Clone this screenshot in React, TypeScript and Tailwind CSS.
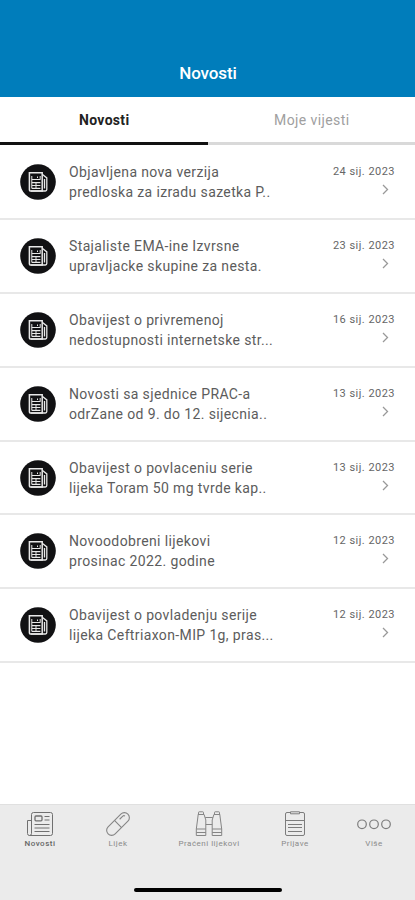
const news = [
    { first: 'Objavljena nova verzija', second: 'predloska za izradu sazetka P..', date: '24 sij. 2023' },
    { first: 'Stajaliste EMA-ine Izvrsne', second: 'upravljacke skupine za nesta.', date: '23 sij. 2023' },
    { first: 'Obavijest o privremenoj', second: 'nedostupnosti internetske str...', date: '16 sij. 2023' },
    { first: 'Novosti sa sjednice PRAC-a', second: 'odrZane od 9. do 12. sijecnia..', date: '13 sij. 2023' },
    { first: 'Obavijest o povlaceniu serie', second: 'lijeka Toram 50 mg tvrde kap..', date: '13 sij. 2023' },
    { first: 'Novoodobreni lijekovi', second: 'prosinac 2022. godine', date: '12 sij. 2023' },
    { first: 'Obavijest o povladenju serije', second: 'lijeka Ceftriaxon-MIP 1g, pras...', date: '12 sij. 2023' },
];

function NewsBadge()
{
    return (
        <svg className="h-9 w-9 shrink-0" viewBox="0 0 36 36" fill="none" stroke="#e8e8e8">
            <circle cx="18" cy="18" r="17.8" fill="#111113" stroke="none" />
            <path strokeWidth="1.5" d="M9.4 8.8h12.8v18.2H10.6a1.2 1.2 0 0 1-1.2-1.2z" />
            <path strokeWidth="1.3" d="M22.2 10.3l4.6 3.6v11.7a1.4 1.4 0 0 1-1.4 1.4H11M24.5 15v9.5" />
            <path strokeWidth="1.1" d="M11.8 15.5h8.600M11.8 18.6h8.600M11.8 21.5h8.600M11.8 24.4h8.600" />
            <path strokeWidth="1" d="M11.8 12v12.400M16 18.500v5.800M20.200 12v3.500M17.500 12.500v1.500" />
        </svg>
    );
}

function NewspaperIcon()
{
    return (
        <svg className="h-7 w-8" viewBox="0 0 32 28" fill="none" stroke="#707070" strokeWidth="1">
            <path d="M9.5 1.5h17a2 2 0 0 1 2 2v19a2 2 0 0 1-2 2h-21a2 2 0 0 1-2-2V9.500h4M7.500 22.500v-19a2 2 0 0 1 2-2M7.500 22.500a2 2 0 0 1-2 2" />
            <rect x="11" y="5" width="7" height="4.8" rx="1" strokeWidth="1.3" />
            <path d="M20.5 5.500h5M20.500 9h5M10.500 13.500h15M10.500 17h15M10.500 20.500h15" />
        </svg>
    );
}

function PillIcon()
{
    return (
        <svg className="h-7 w-7" viewBox="0 0 28 28" fill="none" stroke="#858585" strokeWidth="1.1">
            <g transform="rotate(-45 14 13)">
                <rect x="0" y="8" width="28" height="10" rx="5" />
                <path d="M14 8v10M18.500 10.800h4.500a1.500 1.500 0 0 1 1.500 1.500" />
            </g>
        </svg>
    );
}

function BinocularsIcon()
{
    return (
        <svg className="h-7 w-7" viewBox="0 0 28 28" fill="none" stroke="#858585" strokeWidth="1">
            <path d="M3.500 3.500v-2a.7.700 0 0 1 .7-.7h3.600a.7.700 0 0 1 .7.700v2M2.900 3.500h6.200M3.200 3.500L2.500 9l-1.200 9v6.500h9.500V9l-1.700-5.500M1.300 18h9.500M1.300 21.500h9.500" />
            <path d="M24.500 3.500v-2a.7.700 0 0 0-.7-.7h-3.600a.7.700 0 0 0-.7.700v2M25.100 3.500h-6.200M24.800 3.500l.7 5.500 1.200 9v6.500h-9.500V9l1.700-5.500M26.700 18h-9.500M26.700 21.500h-9.500" />
            <path d="M10.200 6.500h7.600M10.800 13.500h6.400" />
        </svg>
    );
}

function ClipboardIcon()
{
    return (
        <svg className="h-7 w-7" viewBox="0 0 28 28" fill="none" stroke="#7c7c7c" strokeWidth="1">
            <path d="M9 1.500H6A1.500 1.500 0 0 0 4.500 3v20A1.500 1.500 0 0 0 6 24.500h16a1.500 1.500 0 0 0 1.500-1.500V3A1.500 1.500 0 0 0 22 1.500h-3" />
            <path d="M9.500 .8h9v2h-9zM4.500 9.500h19M7 13.500h14M7 16.500h14M7 20.500h14" />
        </svg>
    );
}

function MoreIcon()
{
    return (
        <svg className="h-7 w-9" viewBox="0 0 36 28" fill="none" stroke="#7c7c7c" strokeWidth="1.2">
            <circle cx="6" cy="13.3" r="4.3" />
            <circle cx="18" cy="13.3" r="4.3" />
            <circle cx="30" cy="13.3" r="4.3" />
        </svg>
    );
}

export default function App()
{
    return (
        <div className="flex h-[900px] w-[415px] flex-col overflow-hidden bg-white font-['Roboto',sans-serif]">
            <header className="flex h-[97px] shrink-0 items-end justify-center bg-[#007dbb] pb-3">
                <h1 className="pl-px text-[17px] leading-6 font-medium tracking-[-0.1px] text-white">Novosti</h1>
            </header>

            <div className="flex h-12 shrink-0">
                <button className="flex-1 border-b-[3px] border-[#111] pl-px text-sm font-bold tracking-[0.3px] text-[#222]">Novosti</button>
                <button className="flex-1 border-b-[3px] border-[#d9d9d9] pl-px text-sm tracking-[0.4px] text-[#a0a0a0]">Moje vijesti</button>
            </div>

            <main className="flex-1 pt-px">
                {news.map((item, index) => (
                    <article key={index} className="flex h-[73.9px] items-center border-b-2 border-[#e8e8e8] px-5">
                        <NewsBadge />
                        <p className="ml-[13px] flex-1 text-sm leading-5 tracking-[0.37px] whitespace-nowrap text-[#5c5c5c]">
                            {item.first}
                            <br />
                            {item.second}
                        </p>
                        <div className="flex flex-col items-end pb-1">
                            <time className="text-[11px] leading-4 tracking-[0.47px] text-[#666]">{item.date}</time>
                            <svg className="mt-1 mr-1 h-3 w-3" viewBox="0 0 12 12" fill="none" stroke="#999" strokeWidth="1.3">
                                <path d="M4 1l4.500 4.500L4 10" />
                            </svg>
                        </div>
                    </article>
                ))}
            </main>

            <footer className="flex h-24 shrink-0 flex-col justify-between border-t border-[#e0e0e0] bg-[#ebebeb]">
                <nav className="flex pt-1.5 text-[8px] leading-[10px] tracking-[0.5px] text-[#8a8a8a]">
                    <div className="flex w-20 flex-col items-center font-medium text-[#666]"><NewspaperIcon />Novosti</div>
                    <div className="flex w-[76px] flex-col items-center"><PillIcon />Lijek</div>
                    <div className="flex w-[106px] flex-col items-center"><BinocularsIcon />Praćeni lijekovi</div>
                    <div className="flex w-[66px] flex-col items-center"><ClipboardIcon />Prijave</div>
                    <div className="flex w-[87px] flex-col items-center pl-[5px]"><MoreIcon />Više</div>
                </nav>
                <div className="mb-2 h-1 w-[148px] self-center rounded-full bg-black" />
            </footer>
        </div>
    );
}
